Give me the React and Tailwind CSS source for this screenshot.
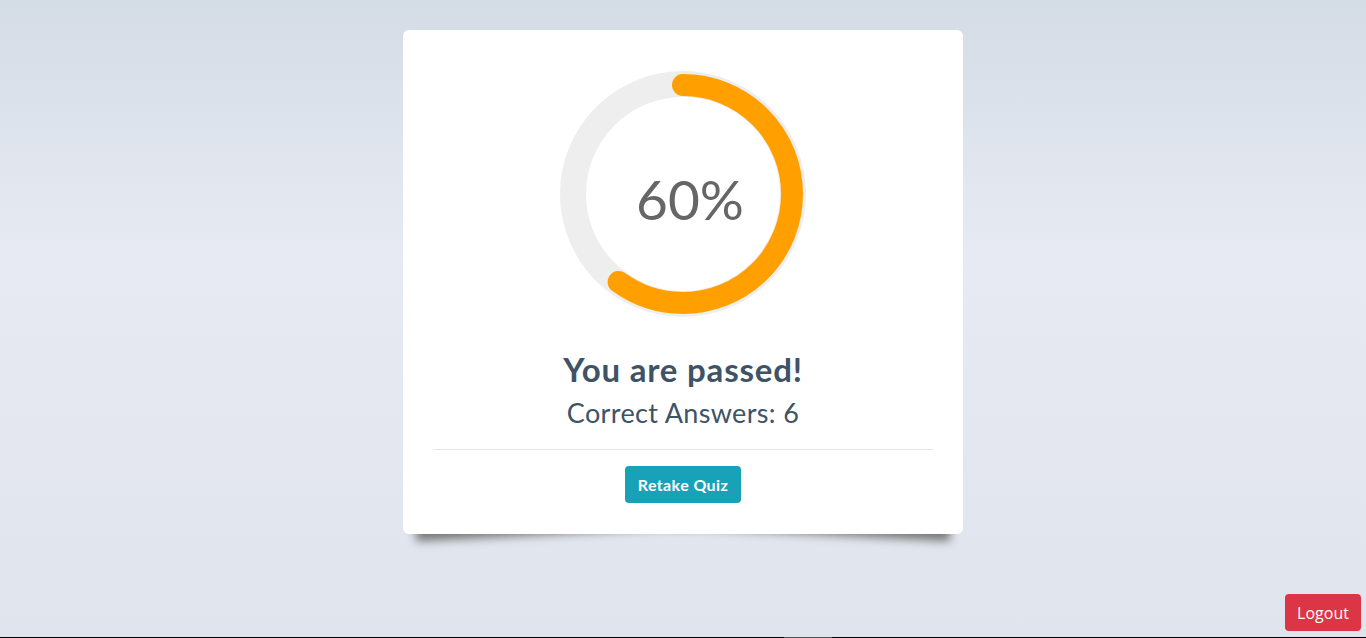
import React from "react";

export default function App() {
  const r = 109;
  const c = 2 * Math.PI * r;
  const pct = 0.6;
  return (
    <div className="isolate relative flex h-[638px] w-full flex-col overflow-hidden bg-[linear-gradient(180deg,#d4dce6_0%,#e7eaf3_40%,#e0e4ed_100%)]" style={{ fontFamily: "Lato, 'Open Sans', sans-serif" }}>
      <div className="flex flex-1 justify-center pt-[30px]">
        <div className="relative h-fit w-[560px]">
          <div className="absolute left-[10px] bottom-[15px] top-[80%] -z-10 w-1/2 -rotate-3 bg-[#777] shadow-[0_15px_10px_#777]"></div>
          <div className="absolute right-[10px] bottom-[15px] top-[80%] -z-10 w-1/2 rotate-3 bg-[#777] shadow-[0_15px_10px_#777]"></div>
          <div className="relative flex flex-col items-center rounded-md bg-white px-[30px] pt-[41px] pb-[31px]">
            <div className="relative h-[246px] w-[246px]">
              <svg width="246" height="246" viewBox="0 0 246 246" className="block">
                <circle cx="123" cy="123" r="110" fill="none" stroke="#eeeeee" strokeWidth="26" />
                <circle
                  cx="123"
                  cy="123"
                  r={r}
                  fill="none"
                  stroke="#ffa000"
                  strokeWidth="22"
                  strokeLinecap="round"
                  strokeDasharray={`${c * pct} ${c}`}
                  transform="rotate(-90 123 123)"
                />
              </svg>
              <div className="absolute inset-0 flex items-center justify-center pt-[10px] pl-[14px] text-[55px] text-[#666666]">
                60%
              </div>
            </div>
            <div className="mt-[34px] text-[33px] font-bold leading-[37px] tracking-[0.8px] text-[#3e5366]">You are passed!</div>
            <div className="mt-[9px] text-[27px] leading-[32px] tracking-[0.35px] text-[#3e5366]">Correct Answers: 6</div>
            <div className="mt-[20px] h-px w-full bg-[#e6e6e6]"></div>
            <button className="mt-[16px] flex h-[37px] w-[116px] items-center justify-center rounded-[4px] bg-[#17a2b8] text-[16px] font-bold tracking-[0.4px] text-white">
              Retake Quiz
            </button>
          </div>
        </div>
      </div>
      <div className="relative h-px w-full bg-black">
        <div className="absolute left-[784px] top-0 h-px w-[48px] bg-[#555]"></div>
      </div>
      <button className="absolute right-[5px] bottom-[7px] flex h-[37px] w-[76px] items-center justify-center rounded-[4px] bg-[#dc3545] text-[16px] text-white" style={{ fontFamily: "'Open Sans', sans-serif" }}>
        Logout
      </button>
    </div>
  );
}
